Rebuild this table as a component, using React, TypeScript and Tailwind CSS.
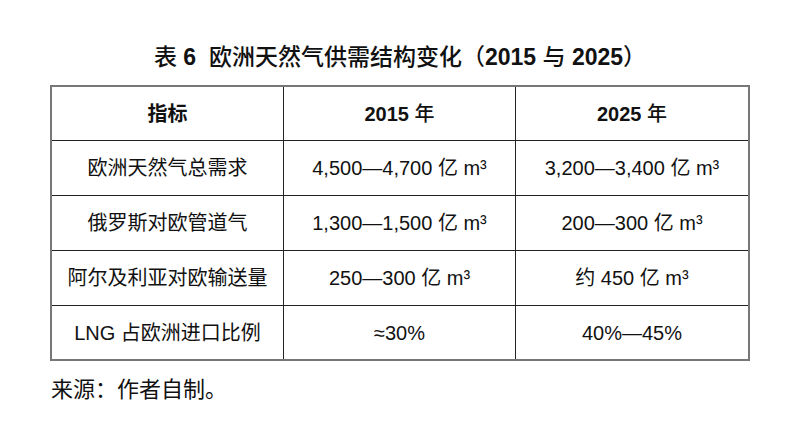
import React from "react";

const FONT = '"Liberation Sans", "Noto Sans CJK SC", sans-serif';

const rows: [string, string, string][] = [
  ["欧洲天然气总需求", "4,500—4,700 亿 m³", "3,200—3,400 亿 m³"],
  ["俄罗斯对欧管道气", "1,300—1,500 亿 m³", "200—300 亿 m³"],
  ["阿尔及利亚对欧输送量", "250—300 亿 m³", "约 450 亿 m³"],
  ["LNG 占欧洲进口比例", "≈30%", "40%—45%"],
];

function Cell({ children, last }: { children: React.ReactNode; last?: boolean }) {
  return (
    <div
      className={
        "flex items-center justify-center text-[20px] leading-none text-[#111] " +
        (last ? "" : "border-r border-[#222]")
      }
    >
      {children}
    </div>
  );
}

export default function App() {
  return (
    <div
      className="w-[800px] h-[444px] bg-white flex flex-col items-center"
      style={{ fontFamily: FONT }}
    >
      <div className="pt-[43px] h-[85px] text-[23px] leading-[28px] text-[#111] whitespace-pre">
        <span className="font-medium">表</span>
        <span className="font-bold"> 6  </span>
        <span className="font-medium">欧洲天然气供需结构变化（</span>
        <span className="font-bold">2015</span>
        <span className="font-medium"> 与 </span>
        <span className="font-bold">2025</span>
        <span className="font-medium">）</span>
      </div>

      <div className="w-[700px] border-2 border-[#777]">
        <div className="grid grid-cols-3 h-[54px] border-b border-[#222]">
          <Cell>
            <span className="font-bold">指标</span>
          </Cell>
          <Cell>
            <span className="font-bold">2015</span>
            <span className="font-medium whitespace-pre"> 年</span>
          </Cell>
          <Cell last>
            <span className="font-bold">2025</span>
            <span className="font-medium whitespace-pre"> 年</span>
          </Cell>
        </div>
        {rows.map((r, i) => (
          <div
            key={i}
            className={
              "grid grid-cols-3 " +
              (i < rows.length - 1 ? "h-[55px] border-b border-[#222]" : "h-[53px]")
            }
          >
            <Cell>
              <span className="whitespace-pre">{r[0]}</span>
            </Cell>
            <Cell>
              <span className="whitespace-pre">{r[1]}</span>
            </Cell>
            <Cell last>
              <span className="whitespace-pre">{r[2]}</span>
            </Cell>
          </div>
        ))}
      </div>

      <div className="w-[700px] mt-[14px] text-[22px] leading-[30px] text-[#111] pl-[1px]">
        来源：作者自制。
      </div>
    </div>
  );
}
